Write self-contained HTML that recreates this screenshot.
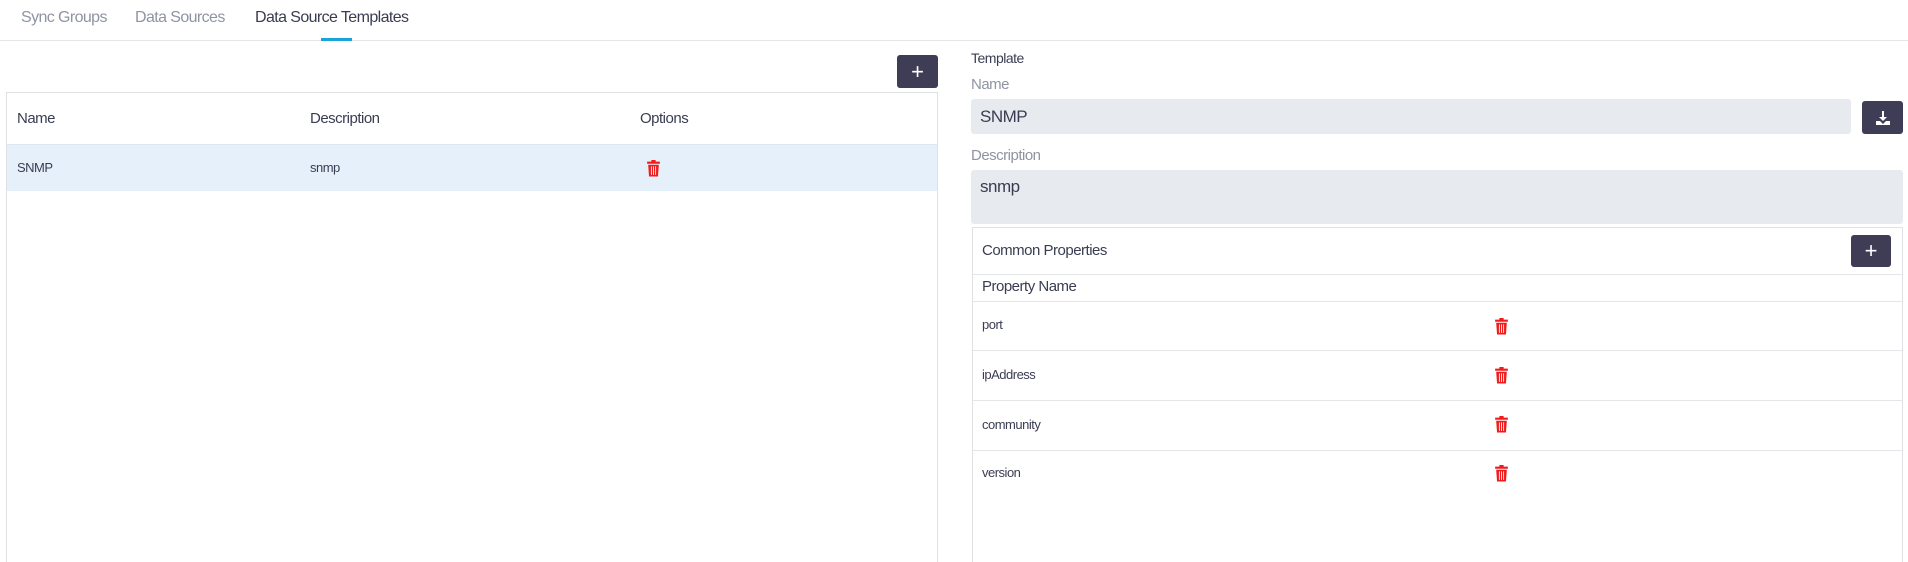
<!DOCTYPE html>
<html style="width:1908px;height:562px;overflow:hidden"><head><style>
*{box-sizing:border-box;margin:0;padding:0}
body{width:1908px;height:562px;background:#fff;font-family:"Liberation Sans",sans-serif;color:#3a3d52;position:relative;overflow:hidden}
.a{position:absolute;white-space:nowrap}
.tab{font-size:16px;top:9px;color:#8f94a3;letter-spacing:-0.6px}
.btn{position:absolute;background:#3f3d56;border-radius:3px;color:#fff;display:flex;align-items:center;justify-content:center;font-size:22px}
.hl{position:absolute;height:1px;background:#e4e6ea}
.t{font-size:14px;letter-spacing:-0.5px}
</style></head><body>
<div class="a tab" style="left:21px">Sync Groups</div>
<div class="a tab" style="left:135px">Data Sources</div>
<div class="a tab" style="left:255px;color:#3a3d52">Data Source Templates</div>
<div class="hl" style="left:0;top:40px;width:1908px"></div>
<div class="a" style="left:321px;top:38px;width:31px;height:3px;background:#1aa3d9"></div>

<div class="btn" style="left:897px;top:55px;width:41px;height:33px">+</div>
<div class="a" style="left:6px;top:92px;width:932px;height:470px;border:1px solid #dfe1e5;border-bottom:none"></div>
<div class="a t" style="left:17px;top:110px;font-size:15px">Name</div>
<div class="a t" style="left:310px;top:110px;font-size:15px">Description</div>
<div class="a t" style="left:640px;top:110px;font-size:15px">Options</div>
<div class="a" style="left:7px;top:144px;width:930px;height:47px;background:#e6f0fb;border-top:1px solid #dfe6ee"></div>
<div class="a t" style="left:17px;top:160px;font-size:13px">SNMP</div>
<div class="a t" style="left:310px;top:160px;font-size:13px">snmp</div>

<div class="a t" style="left:971px;top:50px">Template</div>
<div class="a t" style="left:971px;top:76px;font-size:15px;color:#8f94a3">Name</div>
<div class="a" style="left:971px;top:99px;width:880px;height:35px;background:#e7eaee;border-radius:3px"></div>
<div class="a" style="left:980px;top:107px;font-size:17px;letter-spacing:-0.5px">SNMP</div>
<div class="btn" style="left:1862px;top:101px;width:41px;height:33px"><svg width="16" height="16" viewBox="0 0 16 16"><path d="M7 1h2v6h3l-4 4-4-4h3z M1 11h4l3 3 3-3h4v4H1z" fill="#fff"/></svg></div>
<div class="a t" style="left:971px;top:147px;font-size:15px;color:#8f94a3">Description</div>
<div class="a" style="left:971px;top:170px;width:932px;height:54px;background:#e7eaee;border-radius:3px"></div>
<div class="a" style="left:980px;top:177px;font-size:17px;letter-spacing:-0.5px">snmp</div>

<div class="a" style="left:972px;top:227px;width:931px;height:335px;border:1px solid #dfe1e5;border-bottom:none"></div>
<div class="a t" style="left:982px;top:242px;font-size:15px">Common Properties</div>
<div class="btn" style="left:1851px;top:235px;width:40px;height:32px">+</div>
<div class="hl" style="left:973px;top:274px;width:929px"></div>
<div class="a t" style="left:982px;top:278px;font-size:15px">Property Name</div>
<div class="hl" style="left:973px;top:301px;width:929px"></div>
<div class="a t" style="left:982px;top:317px;font-size:13px">port</div>
<div class="hl" style="left:973px;top:350px;width:929px"></div>
<div class="a t" style="left:982px;top:367px;font-size:13px">ipAddress</div>
<div class="hl" style="left:973px;top:400px;width:929px"></div>
<div class="a t" style="left:982px;top:417px;font-size:13px">community</div>
<div class="hl" style="left:973px;top:450px;width:929px"></div>
<div class="a t" style="left:982px;top:465px;font-size:13px">version</div>

<svg class="a" style="left:647px;top:160px" width="13" height="17" viewBox="0 0 12 16"><path d="M4 0h4v1.5h4v2H0v-2h4z M1 4.5h10l-.8 11H1.8z" fill="#f01c1c"/><path d="M4 6v8M6 6v8M8 6v8" stroke="#fff" stroke-width=".8"/></svg>
<svg class="a" style="left:1495px;top:318px" width="13" height="17" viewBox="0 0 12 16"><path d="M4 0h4v1.5h4v2H0v-2h4z M1 4.5h10l-.8 11H1.8z" fill="#f01c1c"/><path d="M4 6v8M6 6v8M8 6v8" stroke="#fff" stroke-width=".8"/></svg>
<svg class="a" style="left:1495px;top:367px" width="13" height="17" viewBox="0 0 12 16"><path d="M4 0h4v1.5h4v2H0v-2h4z M1 4.5h10l-.8 11H1.8z" fill="#f01c1c"/><path d="M4 6v8M6 6v8M8 6v8" stroke="#fff" stroke-width=".8"/></svg>
<svg class="a" style="left:1495px;top:416px" width="13" height="17" viewBox="0 0 12 16"><path d="M4 0h4v1.5h4v2H0v-2h4z M1 4.5h10l-.8 11H1.8z" fill="#f01c1c"/><path d="M4 6v8M6 6v8M8 6v8" stroke="#fff" stroke-width=".8"/></svg>
<svg class="a" style="left:1495px;top:465px" width="13" height="17" viewBox="0 0 12 16"><path d="M4 0h4v1.5h4v2H0v-2h4z M1 4.5h10l-.8 11H1.8z" fill="#f01c1c"/><path d="M4 6v8M6 6v8M8 6v8" stroke="#fff" stroke-width=".8"/></svg>
</body></html>
